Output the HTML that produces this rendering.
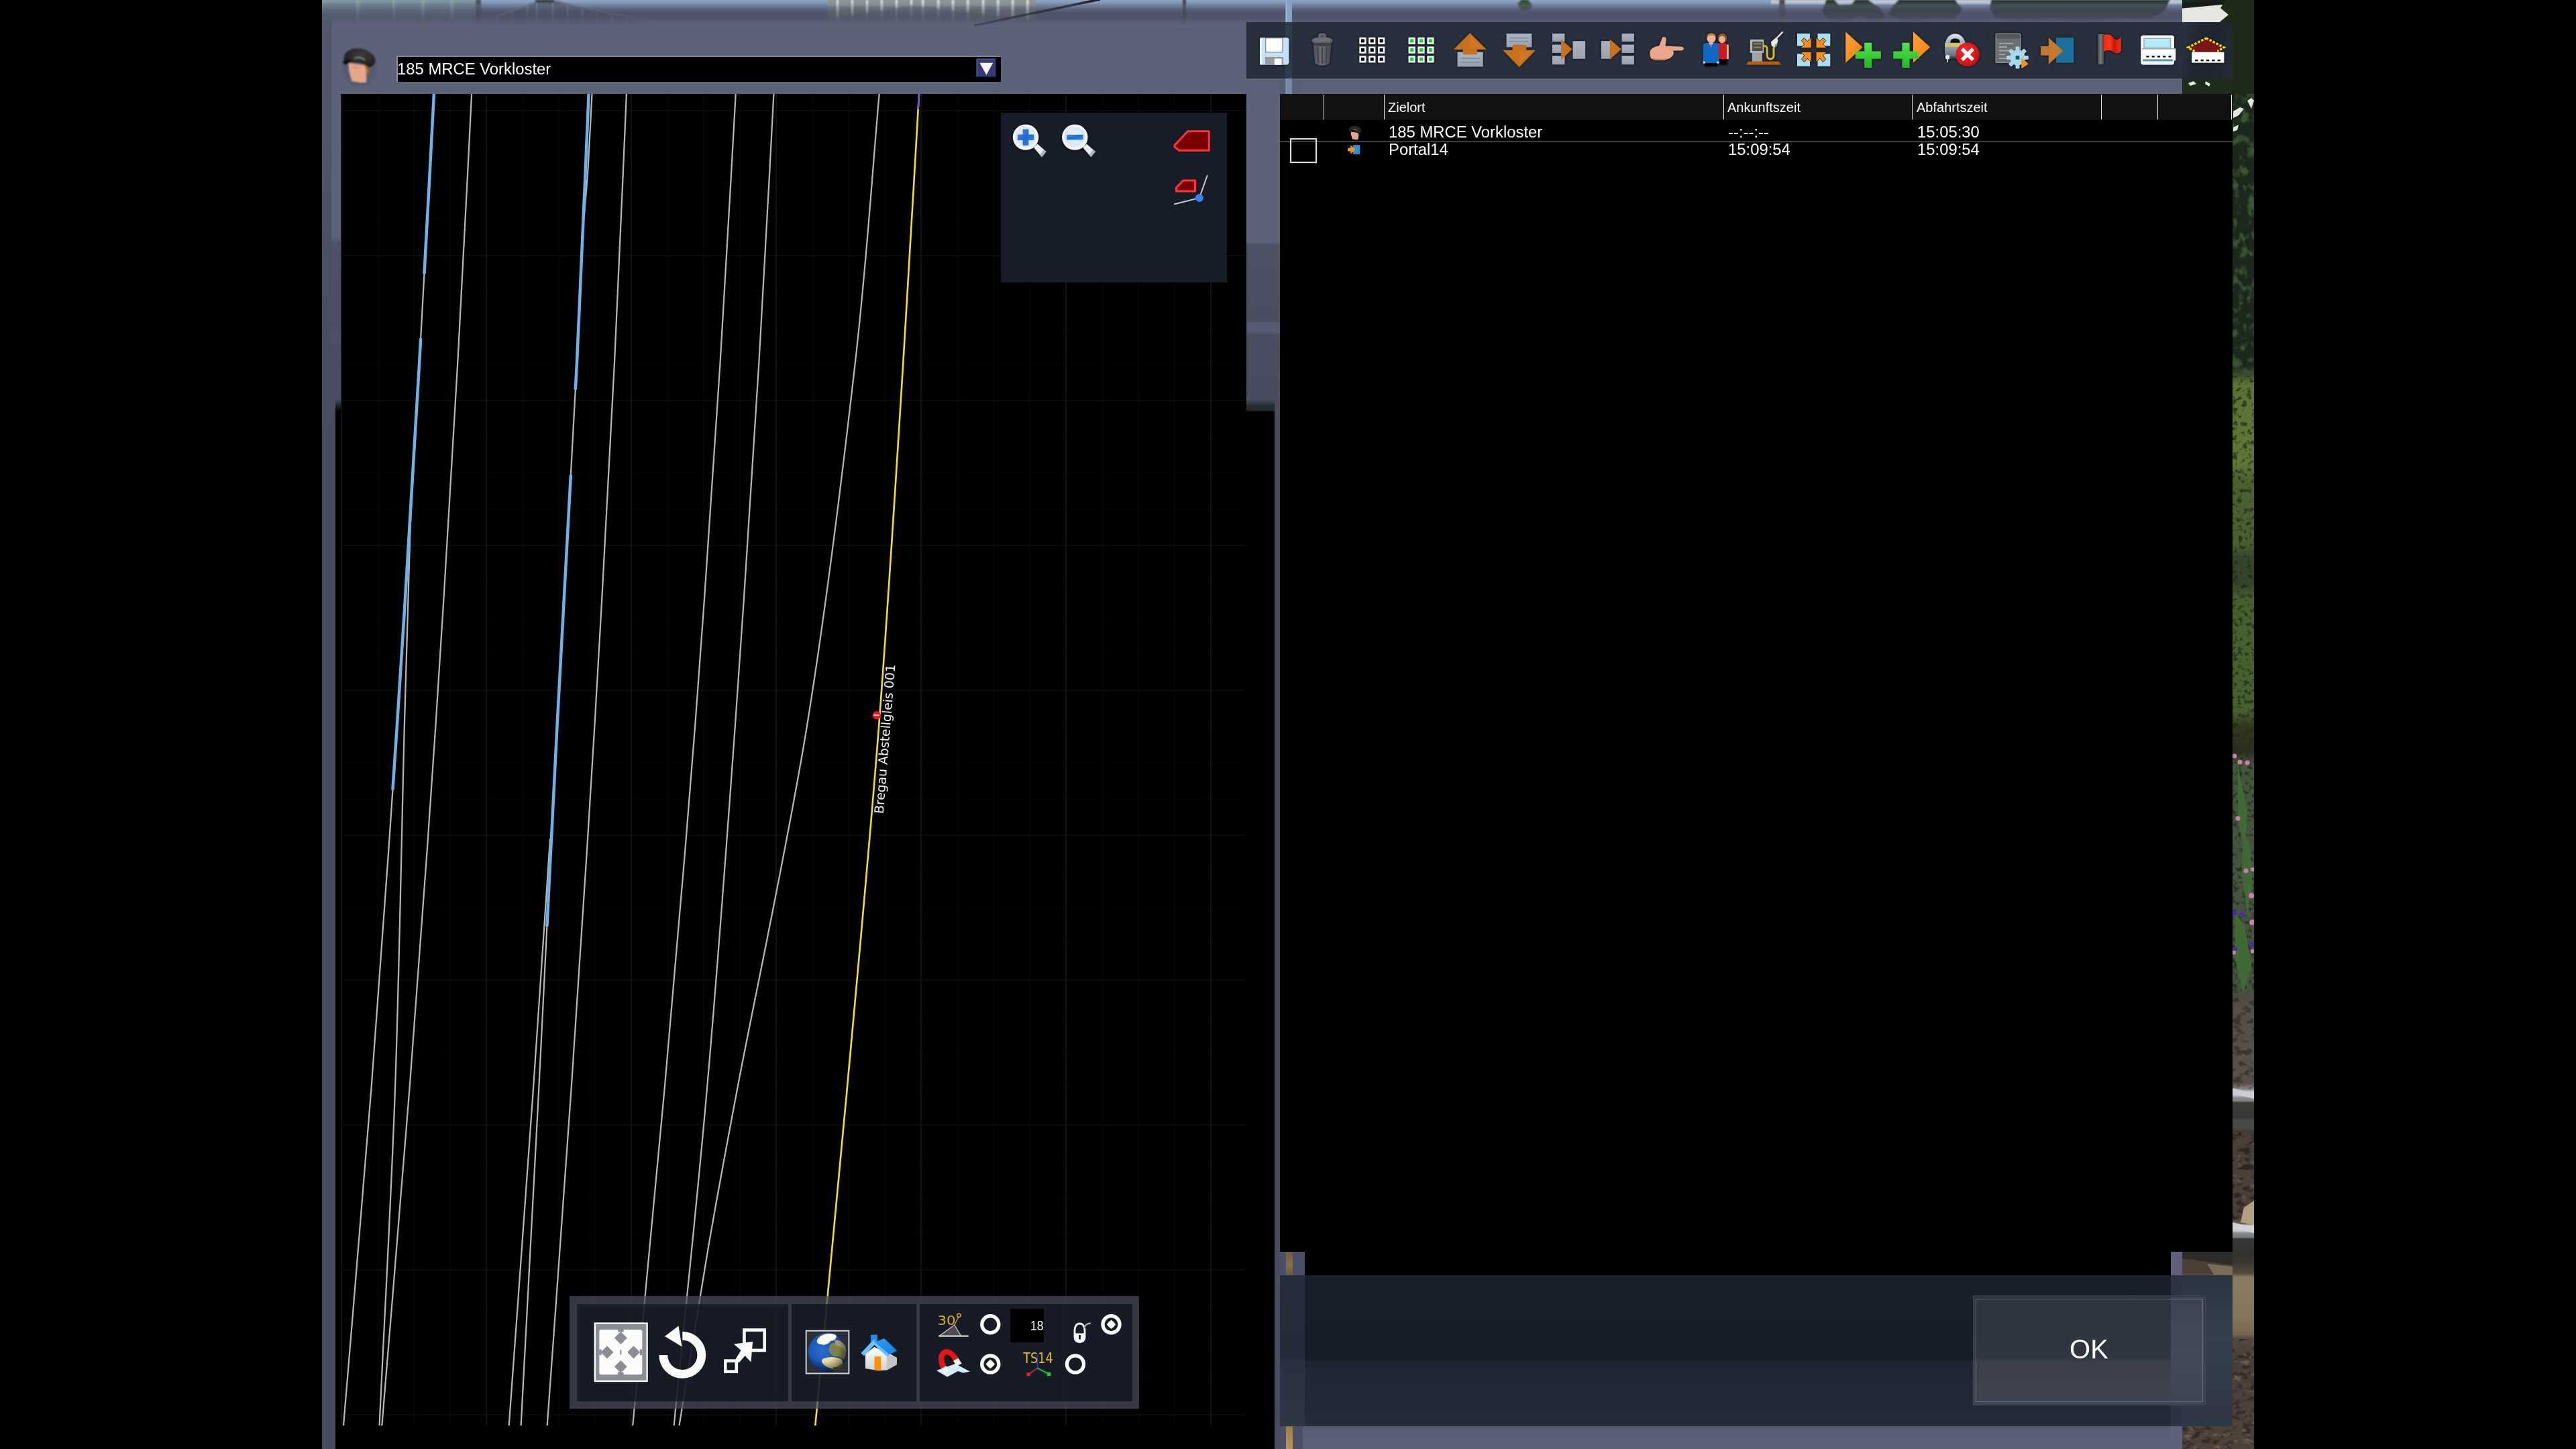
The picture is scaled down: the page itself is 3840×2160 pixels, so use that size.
<!DOCTYPE html>
<html lang="de">
<head>
<meta charset="utf-8">
<title>Fahrplan-Editor</title>
<style>
*{box-sizing:border-box;margin:0;padding:0}
html,body{width:3840px;height:2160px;background:#000;overflow:hidden}
body{position:relative;font-family:"Liberation Sans",sans-serif;color:#fff}
.abs{position:absolute}
#scene{left:480px;top:0;width:2880px;height:2160px;background:#5c6378;overflow:hidden}
/* coordinates inside #scene are absolute page coords minus 480 -> use wrapper with left:-480 */
#w{position:absolute;left:-480px;top:0;width:3840px;height:2160px}
.txt{white-space:nowrap;line-height:1;will-change:transform}
</style>
</head>
<body>
<div id="scene" class="abs"><div id="w">

<!-- ===== background scene bits ===== -->
<div id="bg-top" class="abs" style="left:480px;top:0;width:2880px;height:40px;background:linear-gradient(#8ea4c4 0,#889dbd 3px,#7a8ba9 6px,#69778f 10px,#586078 14px,#4e5369 19px,#4e546a 26px,#575d73 32px,#5c6378 38px)"></div>
<svg id="bg-top-svg" class="abs" style="left:480px;top:0" width="2880" height="140" viewBox="480 0 2880 140">
<defs>
<filter id="bgb" x="-1%" y="-20%" width="102%" height="140%"><feGaussianBlur stdDeviation="1.300"/></filter>
<linearGradient id="fadeD" x1="0" y1="0" x2="0" y2="1"><stop offset="0" stop-color="#fff" stop-opacity="1"/><stop offset="0.220" stop-color="#fff" stop-opacity="0.550"/><stop offset="0.900" stop-color="#fff" stop-opacity="0"/></linearGradient>
<mask id="mfade" maskUnits="userSpaceOnUse" x="480" y="0" width="2880" height="40"><rect x="480" y="0" width="2880" height="40" fill="url(#fadeD)"/></mask>
<filter id="leaf" color-interpolation-filters="sRGB" x="0" y="0" width="100%" height="100%"><feTurbulence type="fractalNoise" baseFrequency="0.090 0.120" numOctaves="2" seed="7" result="n"/><feColorMatrix in="n" type="matrix" values="0 0 0 0 0.100  0 0 0 0 0.160  0 0 0 0 0.090  0 0 0 -7 3.900"/><feGaussianBlur stdDeviation="0.700"/></filter>
</defs>
<g mask="url(#mfade)" filter="url(#bgb)">
<!-- glass building left -->
<rect x="480" y="0" width="237" height="40" fill="#66787c"/>
<rect x="480" y="0" width="237" height="5" fill="#7c9298"/>
<g fill="#8fa3a6" opacity="0.700"><rect x="531" y="0" width="5" height="40"/><rect x="585" y="0" width="4" height="40"/><rect x="628" y="0" width="5" height="40"/><rect x="671" y="0" width="5" height="40"/></g>
<rect x="709" y="0" width="8" height="40" fill="#3c4448"/>
<!-- gable roof -->
<path d="M812 -2 L968 32 L968 40 L720 40 L720 32Z" fill="#4a5062"/>
<path d="M812 -2 L968 32 M812 -2 L720 32" stroke="#707888" stroke-width="2" fill="none"/>
<g stroke="#7e8698" stroke-width="1.600"><path d="M742 25V40M764 17V40M786 9V40M800 4V40M824 4V40M846 9V40M868 14V40M890 19V40M912 23V40M934 27V40M952 30V40"/></g>
<rect x="798" y="0" width="28" height="4" fill="#2c3438"/>
<!-- ribbed building mid -->
<rect x="1234" y="0" width="310" height="40" fill="#70766e"/>
<rect x="1234" y="0" width="310" height="9" fill="#8c9288"/>
<g fill="#e8e8e0"><rect x="1247" y="0" width="3" height="40"/><rect x="1269" y="0" width="3" height="40"/><rect x="1291" y="0" width="3" height="40"/><rect x="1313" y="0" width="3" height="40"/><rect x="1335" y="0" width="3" height="40"/><rect x="1357" y="0" width="3" height="40"/><rect x="1374" y="0" width="3.500" height="40"/><rect x="1397" y="0" width="3.500" height="40"/><rect x="1419" y="0" width="3.500" height="40"/><rect x="1441" y="0" width="3.500" height="40"/><rect x="1464" y="0" width="3.500" height="40"/><rect x="1486" y="0" width="3.500" height="40"/><rect x="1508" y="0" width="3.500" height="40"/><rect x="1530" y="0" width="3.500" height="40"/></g>
<path d="M1234 28 L1360 8 L1544 30 L1544 40 L1234 40Z" fill="#5a6068" opacity="0.600"/>
<path d="M2262 6 l6 -6 l10 0 l6 8 l-4 6 l-12 2z" fill="#2a3a22"/>
<!-- trees right -->
<rect x="2640" y="0" width="720" height="6" fill="#c6ccd6"/>
<g fill="#1e2c1a">
<path d="M2722 0 L2735 0 L2742 8 L2760 6 L2765 0 L2785 0 L2800 10 L2812 26 L2795 32 L2770 24 L2750 34 L2728 30 L2716 18Z"/>
<path d="M2830 0 L2915 0 L2925 14 L2912 30 L2885 26 L2860 34 L2835 30 L2815 22 L2822 8Z"/>
<path d="M2968 0 L3235 0 L3228 14 L3205 30 L3160 26 L3110 34 L3060 30 L3010 32 L2975 26 L2966 12Z"/>
</g>
<rect x="2652" y="0" width="9" height="40" fill="#433c3e"/>
<rect x="1763" y="0" width="5" height="40" fill="#34343c"/>
</g>
<!-- cable -->
<path d="M1452 38 L1640 -1" stroke="#15161c" stroke-width="3.600" opacity="0.900" mask="url(#mfade)"/>
<path d="M1452 38 L1640 -1" stroke="#15161c" stroke-width="3" opacity="0.300"/>
<!-- light pole -->
<rect x="1916.500" y="0" width="9.500" height="140" fill="#85a3c4"/>
<rect x="1916.500" y="0" width="2" height="140" fill="#9ab6d4"/>
<rect x="1905" y="110" width="35" height="30" fill="#535a70" opacity="0.350"/>
</svg>
<!-- right strip -->
<div id="bg-right" class="abs" style="left:3253px;top:0;width:107px;height:2160px;background:linear-gradient(#1b281b 0,#1b281b 545px,#33452a 556px,#5c7234 572px,#5e7636 690px,#4a622f 715px,#48602e 810px,#36462a 830px,#34442a 870px,#45602e 890px,#46602e 1060px,#34381f 1082px,#2c2e1e 1120px,#42563a 1140px,#465440 1300px,#44523e 1470px,#4c4a40 1486px,#574e48 1500px,#5a504a 1615px,#8e8a86 1624px,#c9cdd1 1628px,#c2c6ca 1633px,#8c8e90 1636px,#7c7e80 1641px,#3c3a38 1644px,#3a3836 1666px,#4a4844 1669px,#4a4844 1682px,#463c36 1685px,#4a4038 1700px,#4c4038 1815px,#6a5c4c 1824px,#d0d4d8 1827px,#c6cace 1835px,#8a8c8e 1838px,#7a7c7e 1844px,#383632 1847px,#34322e 1866px,#3a3631 1880px,#54493e 1898px,#8a7c62 1904px,#85775e 1960px,#75684f 1988px,#544840 1996px,#4a4038 2030px,#4e433a 2160px)"></div>
<svg id="bg-right-svg" class="abs" style="left:3253px;top:0" width="107" height="2160" viewBox="3253 0 107 2160">
<defs>
<filter id="ntree" color-interpolation-filters="sRGB" x="0" y="0" width="100%" height="100%"><feTurbulence type="fractalNoise" baseFrequency="0.080 0.060" numOctaves="3" seed="3"/><feColorMatrix type="matrix" values="0 0 0 0 0.220  0 0 0 0 0.330  0 0 0 0 0.190  4.500 0 0 0 -2.250"/></filter>
<filter id="ngrass" color-interpolation-filters="sRGB" x="0" y="0" width="100%" height="100%"><feTurbulence type="fractalNoise" baseFrequency="0.140" numOctaves="3" seed="11"/><feColorMatrix type="matrix" values="0 0 0 0 0.120  0 0 0 0 0.170  0 0 0 0 0.080  4.500 0 0 0 -2.350"/></filter>
<filter id="nrock" color-interpolation-filters="sRGB" x="0" y="0" width="100%" height="100%"><feTurbulence type="fractalNoise" baseFrequency="0.070 0.110" numOctaves="3" seed="5"/><feColorMatrix type="matrix" values="0 0 0 0 0.160  0 0 0 0 0.130  0 0 0 0 0.120  4.500 0 0 0 -2.200"/></filter>
<filter id="nrock2" color-interpolation-filters="sRGB" x="0" y="0" width="100%" height="100%"><feTurbulence type="fractalNoise" baseFrequency="0.070 0.110" numOctaves="3" seed="9"/><feColorMatrix type="matrix" values="0 0 0 0 0.560  0 0 0 0 0.450  0 0 0 0 0.420  4.500 0 0 0 -2.700"/></filter>
</defs>
<rect x="3328" y="117" width="32" height="440" filter="url(#ntree)"/>
<rect x="3328" y="560" width="32" height="920" filter="url(#ngrass)" opacity="0.800"/>
<rect x="3328" y="1486" width="32" height="138" filter="url(#nrock)" opacity="0.600"/>
<rect x="3328" y="1686" width="32" height="136" filter="url(#nrock)" opacity="0.900"/>
<rect x="3328" y="1686" width="32" height="136" filter="url(#nrock2)" opacity="0.500"/>
<rect x="3253" y="1996" width="107" height="164" filter="url(#nrock)" opacity="0.700"/>
<rect x="3253" y="1996" width="107" height="164" filter="url(#nrock2)" opacity="0.750"/>
<!-- rails tilt -->
<path d="M3328 1622 L3360 1630 L3360 1638 L3328 1630Z" fill="#c9cdd1"/>
<path d="M3328 1822 L3360 1830 L3360 1838 L3328 1830Z" fill="#d0d4d8"/>
<path d="M3345 1800 L3360 1790 L3360 1826 L3340 1822Z" fill="#b0a080"/>
<!-- white wall top-right and tree -->
<rect x="3253" y="6" width="70" height="134" fill="#e6e6e1"/>
<path d="M3225 7 L3360 -5 L3360 2.500 L3253 12.500 L3225 15Z" fill="#1a1c1c"/>
<path d="M3360 0 L3318 0 L3310 12 L3322 22 L3305 36 L3318 52 L3304 70 L3320 86 L3300 104 L3320 118 L3330 140 L3360 140Z" fill="#1d2a18"/>
<path d="M3253 117 L3328 117 L3328 140 L3253 140Z" fill="#1f2b1b"/>
<path d="M3262 124 l8 -3 l4 4 l-9 3z M3288 121 l7 4 l-2 4 l-6 -4z" fill="#e8e8e4"/>
<path d="M3329 166 l10 -6 l6 2 l-8 10 l-8 4z M3350 150 l6 -4 l4 4 l-4 12z M3329 190 l8 -4 l-2 8 l-6 2z" fill="#e4e4e0"/>
<!-- flowers -->
<g fill="#3f6a36"><path d="M3336 1140 l6 30 l8 40 l-4 60 l-10 -50z M3344 1240 l10 20 l4 60 l-8 40 l-8 -60z M3332 1360 l14 20 l10 60 l-12 40 l-12 -50z"/></g>
<g fill="#cf7ab4"><circle cx="3331" cy="1127" r="3.500"/><circle cx="3339" cy="1136" r="3.500"/><circle cx="3350" cy="1137" r="3.500"/><circle cx="3336" cy="1220" r="3.500"/><circle cx="3348" cy="1298" r="3.500"/><circle cx="3358" cy="1296" r="3"/><circle cx="3356" cy="1335" r="4"/><circle cx="3357" cy="1375" r="4"/><circle cx="3330" cy="1420" r="3"/><circle cx="3358" cy="1418" r="3"/></g>
<g fill="#4c2ab0"><circle cx="3330" cy="1361" r="4"/><circle cx="3342" cy="1363" r="3.500"/><circle cx="3357" cy="1408" r="4"/><circle cx="3332" cy="1414" r="3"/></g>
<!-- sleeper lower right (below list) -->
<path d="M3253 1866 L3328 1866 L3328 1900 L3253 1900Z" fill="#4a4038"/>
<path d="M3253 1866 L3328 1866 L3328 1886 L3253 1876Z" fill="#2e2c28"/>
<path d="M3290 1884 L3328 1888 L3328 1900 L3300 1900Z" fill="#7a6c58"/>
</svg>

<!-- ===== left panel frame ===== -->
<div id="frameL-edge" class="abs" style="left:480px;top:30px;width:14px;height:2130px;background:linear-gradient(#50566b 0,#51576c 8px,#50556a 200px,#4a4f63 330px,#494e62 560px,#484c61 620px,#474b60 2130px)"></div>
<div id="frameL-in" class="abs" style="left:494px;top:37px;width:14px;height:2123px;background:linear-gradient(#5c6378 0,#5c6378 316px,#4c5166 326px,#4a4f64 450px,#4d5268 468px,#494e63 480px,#484c61 583px,#474b60 2123px)"></div>
<div id="frameL-fade" class="abs" style="left:500px;top:596px;width:8px;height:18px;background:linear-gradient(#43485c 0,#2a3238 6px,#10161a 12px,#000 18px)"></div>
<div id="gap" class="abs" style="left:1858px;top:117px;width:50px;height:2043px;background:linear-gradient(#5c6378 0,#5c6378 243px,#4c5166 248px,#494e62 360px,#555b73 366px,#565c74 376px,#484d61 382px,#474c5f 478px,#3a4146 483px,#262e31 487px,#232b2e 494px,#0a0e10 497px,#000 499px)"></div>
<div id="gapR" class="abs" style="left:1900px;top:598px;width:8px;height:1562px;background:#484c61"></div>

<!-- black backing -->
<div id="blk" class="abs" style="left:500px;top:613px;width:1400px;height:1547px;background:#000"></div>

<!-- ===== map ===== -->
<div id="map" class="abs" style="left:508px;top:140px;width:1350px;height:1985px;background-color:#000;background-image:
linear-gradient(90deg,#121212 0,#121212 2px,transparent 2px),
linear-gradient(#0b0b0b 0,#0b0b0b 2px,transparent 2px),
linear-gradient(90deg,#040404 0,#040404 2px,transparent 2px),
linear-gradient(#030303 0,#030303 2px,transparent 2px);
background-size:216px 216px,216px 216px,54px 54px,54px 54px;
background-position:0 0,0 24px,0 0,0 24px"></div>
<svg id="tracks" class="abs" style="left:508px;top:140px" width="1350" height="1985" viewBox="508 140 1350 1985">
<defs>
<filter id="gray" x="-10%" y="-10%" width="120%" height="120%"><feOffset dx="0" dy="0"/></filter>
<clipPath id="cb1"><rect x="508" y="140" width="400" height="268"/><rect x="508" y="504.600" width="400" height="673"/></clipPath>
<clipPath id="cb2"><rect x="700" y="140" width="400" height="441"/><rect x="700" y="708" width="400" height="673"/></clipPath>
</defs>
<g fill="none" stroke="#b6b6b6" stroke-width="2.250">
<path id="T1" d="M646.9 140.0 C639.7 273.3 634.4 383.3 625.2 540.0 C616.1 696.7 603.9 900.0 592.0 1080.0 C580.1 1260.0 567.0 1445.8 553.7 1620.0 C540.4 1794.2 525.9 1956.7 512.0 2125.0"/>
<path id="T1b" d="M616.4 700.0 C614.7 733.3 613.5 736.7 611.2 800.0 C609.0 863.3 606.6 943.3 602.9 1080.0 C599.2 1216.7 595.3 1445.8 589.1 1620.0 C582.9 1794.2 573.4 1956.7 565.6 2125.0"/>
<path id="T2" d="M703.1 140.0 C696.2 273.3 691.2 383.3 682.3 540.0 C673.4 696.7 661.4 900.0 649.5 1080.0 C637.6 1260.0 624.1 1445.8 610.7 1620.0 C597.3 1794.2 583.1 1956.7 569.3 2125.0"/>
<path id="T3" d="M877.6 140.0 C871.7 273.3 867.8 383.3 860.0 540.0 C852.2 696.7 840.0 900.0 830.6 1080.0 C821.2 1260.0 812.4 1445.8 803.4 1620.0 C794.4 1794.2 785.5 1956.7 776.6 2125.0"/>
<path id="T3a" d="M882.5 140.0 C880.5 176.7 878.6 219.2 876.6 250.0 C874.6 280.8 872.5 300.0 870.4 325.0"/>
<path id="T3b" d="M820.0 1250.0 C811.7 1373.3 805.4 1474.2 795.2 1620.0 C785.0 1765.8 770.9 1956.7 758.7 2125.0"/>
<path id="T4" d="M933.9 140.0 C927.9 273.3 923.9 383.3 916.0 540.0 C908.1 696.7 897.2 900.0 886.5 1080.0 C875.8 1260.0 863.6 1445.8 851.8 1620.0 C840.0 1794.2 827.7 1956.7 815.7 2125.0"/>
<path id="T5" d="M1096.7 140.0 C1089.0 273.3 1083.7 383.3 1073.6 540.0 C1063.5 696.7 1050.1 900.0 1036.3 1080.0 C1022.5 1260.0 1006.4 1445.8 990.9 1620.0 C975.4 1794.2 959.1 1956.7 943.2 2125.0"/>
<path id="T6" d="M1153.4 140.0 C1146.1 273.3 1141.0 383.3 1131.4 540.0 C1121.8 696.7 1108.9 900.0 1096.0 1080.0 C1083.1 1260.0 1069.4 1445.8 1054.2 1620.0 C1039.0 1794.2 1021.2 1956.7 1004.7 2125.0"/>
<path id="T7" d="M1310.7 140.0 C1298.8 273.3 1292.8 383.3 1274.9 540.0 C1257.0 696.7 1232.5 900.0 1203.3 1080.0 C1174.1 1260.0 1124.3 1490.0 1099.7 1620.0 C1075.1 1750.0 1070.3 1775.8 1055.8 1860.0 C1041.3 1944.2 1026.9 2036.7 1012.5 2125.0"/>
</g>
<g fill="none" stroke="#6db2e8" stroke-width="4.500">
<use href="#T1" clip-path="url(#cb1)"/>
<use href="#T3" clip-path="url(#cb2)"/>
</g>
<path id="T8" fill="none" stroke="#f4e11e" stroke-width="2.6" d="M1370.0 140.0 C1362.1 273.3 1356.4 383.3 1346.4 540.0 C1336.5 696.7 1324.2 900.0 1310.3 1080.0 C1296.4 1260.0 1278.8 1445.8 1263.0 1620.0 C1247.2 1794.2 1231.2 1956.7 1215.3 2125.0"/>
<path fill="none" stroke="#5c5ccc" stroke-width="2.6" d="M1370 140 L1368.7 163"/>
<circle cx="1306.700" cy="1066.300" r="6.200" fill="#e8141c"/>
<rect x="1302.500" y="1065" width="8.400" height="2.200" fill="#f6c8c8"/>
<g filter="url(#gray)"><text x="0" y="0" transform="translate(1316.700 1213.400) rotate(-85.440)" font-family="'DejaVu Sans','Liberation Sans',sans-serif" font-size="18.850" fill="#f2f2f2">Bregau Abstellgleis 001</text></g>
</svg>

<!-- ===== map nav toolbar ===== -->
<div id="nav" class="abs" style="left:849px;top:1932px;width:848.500px;height:168px;background:rgba(72,77,95,0.740)"></div>
<div id="nav1" class="abs" style="left:860px;top:1943.500px;width:315px;height:145px;background:rgba(10,14,24,0.700);box-shadow:inset 3px 3px 4px rgba(50,55,70,0.350)"></div>
<div id="nav2" class="abs" style="left:1180px;top:1943.500px;width:186px;height:145px;background:rgba(10,14,24,0.700)"></div>
<div id="nav3" class="abs" style="left:1371px;top:1943.500px;width:316.500px;height:145px;background:rgba(10,14,24,0.700)"></div>
<svg id="navicons" class="abs" style="left:849px;top:1932px" width="849" height="168" viewBox="849 1932 849 168">
<defs>
<filter id="nvb" x="-5%" y="-10%" width="110%" height="120%"><feGaussianBlur stdDeviation="0.600"/></filter>
<filter id="nvg" x="-20%" y="-20%" width="140%" height="140%"><feOffset dx="0" dy="0"/></filter>
<radialGradient id="ocean" cx="0.35" cy="0.45" r="0.75"><stop offset="0" stop-color="#2a6fd0"/><stop offset="0.600" stop-color="#1650a8"/><stop offset="1" stop-color="#0a2a66"/></radialGradient>
<radialGradient id="gshade" cx="0.4" cy="0.35" r="0.7"><stop offset="0.550" stop-color="#000" stop-opacity="0"/><stop offset="1" stop-color="#000" stop-opacity="0.600"/></radialGradient>
<linearGradient id="wall" x1="0" y1="0" x2="0" y2="1"><stop offset="0" stop-color="#ffffff"/><stop offset="1" stop-color="#d2d2d2"/></linearGradient>
<linearGradient id="roof" x1="0" y1="0" x2="1" y2="1"><stop offset="0" stop-color="#3aa4f6"/><stop offset="1" stop-color="#0f7fe4"/></linearGradient>
<clipPath id="gclip"><circle cx="1233.600" cy="2015.800" r="29"/></clipPath>
</defs>
<g filter="url(#nvb)">
<!-- move button -->
<rect x="886.800" y="1972.600" width="77.800" height="86.300" fill="#8a8d94" stroke="#fafafa" stroke-width="2.400"/>
<rect x="893.300" y="1982" width="64" height="67" rx="3" fill="#fbfbfa"/>
<g fill="#8a8d94">
<path d="M925.300 1985 L934.800 1994.500 L925.300 2004 L915.800 1994.500Z"/>
<path d="M925.300 2027.800 L934.800 2037.300 L925.300 2046.800 L915.800 2037.300Z"/>
<path d="M905 2006.300 L914.500 2015.800 L905 2025.300 L895.500 2015.800Z"/>
<path d="M944.500 2006.300 L954 2015.800 L944.500 2025.300 L935 2015.800Z"/>
<rect x="893.300" y="2011.500" width="3.500" height="8.600"/><rect x="953.800" y="2011.500" width="3.500" height="8.600"/>
<rect x="921" y="1982" width="8.600" height="3.500"/><rect x="921" y="2045.500" width="8.600" height="3.500"/>
<rect x="924.300" y="2012.300" width="2" height="7"/>
</g>
<!-- rotate -->
<path d="M1017.300 1991.400 A28.500 28.500 0 1 1 988.800 2019.900" fill="none" stroke="#fbfbfa" stroke-width="12.800"/>
<path d="M991 1992 L1011.500 1976.500 L1016.500 2007.500Z" fill="#fbfbfa"/>
<!-- scale -->
<rect x="1109.400" y="1982.600" width="30.300" height="30.300" fill="none" stroke="#fbfbfa" stroke-width="4.700"/>
<rect x="1081.300" y="2028.600" width="16.500" height="16" fill="none" stroke="#fbfbfa" stroke-width="4.600"/>
<path d="M1096 2027 L1104.500 2013 L1094 2003.500 L1122 2000 L1119.500 2030.500 L1110.500 2021 L1101.500 2031.500Z" fill="#fbfbfa"/>
<rect x="1111.800" y="1985" width="25.600" height="25.600" fill="#171c28" opacity="0"/>
<!-- globe -->
<rect x="1201.700" y="1983.800" width="63.700" height="63.600" fill="#2b2d34" stroke="#d0d2d6" stroke-width="2"/>
<circle cx="1233.600" cy="2015.800" r="29" fill="url(#ocean)"/>
<g clip-path="url(#gclip)">
<path d="M1219 1996 C1224 1988 1238 1986 1246 1990 C1249 1994 1244 1999 1238 1999 C1236 2003 1229 2006 1224 2004 C1219 2004 1216 2000 1219 1996Z" fill="#fafafa"/>
<path d="M1238 2004 C1244 2000 1254 2000 1259 2006 C1262 2012 1262 2022 1258 2028 C1254 2024 1250 2022 1244 2022 C1238 2020 1234 2014 1236 2008Z" fill="#7e8448"/>
<path d="M1244 1998 C1250 1996 1256 2000 1260 2006 L1262 2016 C1258 2010 1252 2006 1246 2006Z" fill="#a89868"/>
<path d="M1226 2026 C1232 2022 1246 2022 1254 2026 C1258 2030 1256 2036 1250 2040 C1244 2042 1236 2040 1230 2036 C1225 2032 1224 2029 1226 2026Z" fill="#ecdca2"/>
<path d="M1242 2038 C1248 2038 1252 2036 1254 2032 C1254 2040 1250 2044 1246 2046 C1242 2044 1241 2041 1242 2038Z" fill="#5e7236"/>
</g>
<circle cx="1233.600" cy="2015.800" r="29" fill="url(#gshade)"/>
<!-- house -->
<path d="M1290 2018 L1303 2008 L1323 2016 L1337 2024 L1337 2034 L1322 2042.500 L1308 2043 L1290 2040Z" fill="url(#wall)"/>
<path d="M1322 2018 L1337 2024 L1337 2034 L1322 2042.500Z" fill="#c4c4c4"/>
<rect x="1303.500" y="2022.200" width="9.500" height="19.800" fill="#f89200"/>
<path d="M1298 1990 L1308 1989.600 L1308 1997 L1298 2004Z" fill="#1c8cee"/>
<path d="M1303.300 1996 L1283.600 2017 L1288 2021 L1303.300 2005 L1322 2021.500 L1337.200 2013.500 L1318 1995 L1309 1999Z" fill="url(#roof)"/>
<path d="M1303.300 1996 L1283.600 2017 L1288 2021 L1303.300 2005 L1322 2021.500 L1326 2019.500 L1303.300 2000Z" fill="#6cc0fa"/>
<!-- 30deg -->
<path d="M1400 1991.500 L1422.800 1975 L1432.500 1991.500Z" fill="#4e4e50" stroke="#cfcfcf" stroke-width="1.200"/>
<path d="M1399.500 1991.700 H1443.800" stroke="#d6d6d6" stroke-width="2.200"/>
<path d="M1422.800 1975 L1429 1963" stroke="#c9a516" stroke-width="1.400"/>
<text x="1397.500" y="1975.300" font-family="'DejaVu Sans','Liberation Sans',sans-serif" font-size="19" fill="#d8b312" textLength="27" lengthAdjust="spacingAndGlyphs">30</text>
<circle cx="1429.300" cy="1960.800" r="2.600" fill="none" stroke="#d8b312" stroke-width="1.500"/>
<!-- rings -->
<g fill="none" stroke="#fcfcfc" stroke-width="5.200">
<circle cx="1476.300" cy="1974.300" r="12.600"/><circle cx="1656.500" cy="1974.300" r="12.600"/>
<circle cx="1476.300" cy="2033.400" r="12.600"/><circle cx="1603" cy="2033.400" r="12.600"/>
</g>
<path d="M1656.500 1967.500 L1663.300 1974.300 L1656.500 1981.100 L1649.700 1974.300Z" fill="#fcfcfc"/>
<path d="M1476.300 2026.600 L1483.100 2033.400 L1476.300 2040.200 L1469.500 2033.400Z" fill="#fcfcfc"/>
<circle cx="1656.500" cy="1974.300" r="5.200" fill="#fcfcfc"/><circle cx="1476.300" cy="2033.400" r="5.200" fill="#fcfcfc"/>
<!-- black box -->
<rect x="1505.900" y="1950.900" width="50.200" height="50" fill="#000"/>
<!-- mouse lock -->
<path d="M1602 1984 C1602 1976.500 1605.500 1973 1609.500 1973 C1613.500 1973 1617 1976.500 1617 1984 L1617 1994 C1617 1998.500 1613.500 2000.500 1609.500 2000.500 C1605.500 2000.500 1602 1998.500 1602 1994Z" fill="none" stroke="#fbfbfb" stroke-width="2.800"/>
<path d="M1602 1987.500 L1617 1987.500 L1617 1994 C1617 1998.500 1613.500 2000.500 1609.500 2000.500 C1605.500 2000.500 1602 1998.500 1602 1994Z" fill="#fbfbfb"/>
<rect x="1608.100" y="1990" width="2.800" height="6.500" fill="#171c28"/>
<path d="M1616 1980 C1617 1975.500 1621 1973 1626 1972.500" fill="none" stroke="#b9bcc0" stroke-width="1.800"/>
<!-- magnet -->
<path d="M1396 2043 L1424 2033 L1446 2044.500 L1436 2046.500 L1428 2044 L1412 2052.500Z" fill="#d4ecfa"/>
<path d="M1403 2040.500 C1397 2030 1398 2017 1405.500 2012.500 C1413 2008.500 1422 2013 1428.500 2024.500 L1421 2028.500 C1417 2021 1412.500 2018.500 1409.500 2020 C1406.500 2022 1406.500 2028 1410.500 2036Z" fill="#e21212"/>
<path d="M1428.500 2024.500 L1433.500 2032.500 L1426 2036.500 L1421 2028.500Z" fill="#f3f3f3"/>
<path d="M1410.500 2036 L1415 2044.500 L1408 2048 L1403 2040.500Z" fill="#f3f3f3"/>
<path d="M1409.500 2020 C1412.500 2018.500 1417 2021 1421 2028.500 L1418 2030 C1415 2024 1412 2022 1410.500 2022.600Z" fill="#1a0606"/>
<!-- TS14 -->
<path d="M1546.500 2019.700 L1546.500 2039.400" stroke="#2a30d8" stroke-width="2.200"/>
<path d="M1546.500 2039.400 L1533.500 2048.600" stroke="#c81e24" stroke-width="2.200"/>
<path d="M1546.500 2039.400 L1563.500 2048.200" stroke="#18b428" stroke-width="2.200"/>
<rect x="1530.500" y="2046" width="5.400" height="5.400" fill="#e0222a"/><rect x="1560.800" y="2045.500" width="5.600" height="5.600" fill="#1cc82e"/>
<text x="1525.300" y="2031.800" font-family="'DejaVu Sans','Liberation Sans',sans-serif" font-size="21" fill="#e6c01c" textLength="44.400" lengthAdjust="spacingAndGlyphs">TS14</text>
</g>
<g filter="url(#nvg)"><text x="1536" y="1982.900" font-family="'Liberation Sans',sans-serif" font-size="20.200" fill="#fff" textLength="19.600" lengthAdjust="spacingAndGlyphs">18</text></g>
</svg>

<!-- ===== dropdown + driver icon ===== -->
<svg id="driver" class="abs" style="left:504px;top:64px" width="64" height="68" viewBox="504 64 64 68">
<defs><filter id="bl1" x="-20%" y="-20%" width="140%" height="140%"><feGaussianBlur stdDeviation="0.9"/></filter>
<radialGradient id="capg" cx="0.55" cy="0.35" r="0.7"><stop offset="0" stop-color="#3c3c3a"/><stop offset="1" stop-color="#1c1c1c"/></radialGradient></defs>
<g filter="url(#bl1)">
<ellipse cx="536" cy="100" rx="26" ry="29" fill="#3c4258" opacity="0.220"/>
<path d="M519.300 94 L545.500 97.500 L546.200 122.500 L538 123.200 L524.500 121 L520.500 107 Z" fill="#e6a68c"/>
<path d="M541 95.500 C546 97 550 101 549.500 108 C548 113 546.500 110 545.800 104 C545 100 543 98 541 95.500Z" fill="#c2660e"/>
<path d="M525 100 L534 101.500" stroke="#c88a78" stroke-width="1.300" fill="none"/>
<path d="M513 86 C513 76 525 71.500 536 72.500 C549 74 560 82 559.500 91 C559 97 554 100 549 100.500 C546 97 541 94.500 533 93.500 C526 92.500 521 93 517.500 94.500 C513.500 95 511.500 91.500 513 86Z" fill="url(#capg)"/>
<path d="M511.500 92 C514 88.500 519 88 524 89.500 C522 93 519 95.500 516 96 C513 96.500 510.500 95 511.500 92Z" fill="#111"/>
<path d="M529 87 C533 84.500 539 85.500 543 89" stroke="#7b7f84" stroke-width="2" fill="none" stroke-linecap="round"/>
</g>
</svg>
<div id="dd" class="abs" style="left:591px;top:83px;width:901px;height:39px;background:#000;border-left:2px solid #8a8f9c;border-top:2px solid #7c8190"></div>
<div id="ddtext" class="abs txt" style="left:592px;top:90.600px;font-size:23.850px;color:#fff">185 MRCE Vorkloster</div>
<svg id="ddbtn" class="abs" style="left:1455px;top:87px" width="31" height="29" viewBox="0 0 31 29"><defs><filter id="ddb"><feGaussianBlur stdDeviation="0.600"/></filter></defs>
<rect x="0.500" y="0.500" width="29.500" height="27.500" fill="#333a74"/>
<rect x="0.500" y="0.500" width="29.500" height="2" fill="#4a5190"/><rect x="0.500" y="0.500" width="2" height="27.500" fill="#4a5190"/>
<rect x="0.500" y="26" width="29.500" height="2" fill="#23285a"/><rect x="28" y="0.500" width="2" height="27.500" fill="#23285a"/>
<path d="M5.500 6.800 L25.200 6.800 L15.400 24.700 Z" fill="#f6f6fa" filter="url(#ddb)"/>
</svg>

<!-- ===== zoom panel ===== -->
<div id="zoompanel" class="abs" style="left:1492px;top:168px;width:337px;height:252.500px;background:rgba(24,30,42,0.960)"></div>
<svg id="zoomicons" class="abs" style="left:1492px;top:168px" width="337" height="253" viewBox="1492 168 337 253">
<defs>
<filter id="bl2" x="-20%" y="-20%" width="140%" height="140%"><feGaussianBlur stdDeviation="0.700"/></filter>
<radialGradient id="lens" cx="0.5" cy="0.4" r="0.6"><stop offset="0" stop-color="#eef4fb"/><stop offset="0.750" stop-color="#d7e6f6"/><stop offset="1" stop-color="#f4f7fa"/></radialGradient>
<linearGradient id="blu" x1="0" y1="0" x2="1" y2="1"><stop offset="0" stop-color="#4a90ea"/><stop offset="0.500" stop-color="#1f68d2"/><stop offset="1" stop-color="#3c86e6"/></linearGradient>
</defs>
<g filter="url(#bl2)">
 <g id="mag">
  <circle cx="1529" cy="205.500" r="21.500" fill="#0c1018" opacity="0.550"/>
  <path d="M1541 220 L1546.500 214.500 L1559.500 226 L1553 234 Z" fill="#e9eef2"/>
  <path d="M1553 234 L1559.500 226 L1556 223 L1550 231Z" fill="#aeb6be"/>
  <circle cx="1529" cy="204.600" r="19.200" fill="#f5f7fa"/>
  <circle cx="1529" cy="204.600" r="16.200" fill="url(#lens)"/>
 </g>
 <path d="M1516.800 200.400 h7.800 v-7.800 h8.800 v7.800 h7.800 v8.600 h-7.800 v7.800 h-8.800 v-7.800 h-7.800 Z" fill="url(#blu)"/>
 <use href="#mag" x="73.300" y="0"/>
 <rect x="1590.200" y="200.800" width="24.400" height="7.600" fill="url(#blu)"/>
 <path d="M1770.500 195.800 L1802.200 195.800 L1802.200 224.200 L1757.500 224.200 L1751 219 L1751 216.500 Z" fill="#780000" stroke="#ff343a" stroke-width="3" stroke-linejoin="round"/>
 <path d="M1764 269 L1781.500 269 L1781.500 285 L1753.500 285 L1753.500 279.500 Z" fill="#780000" stroke="#ff343a" stroke-width="3" stroke-linejoin="round"/>
 <path d="M1751 304.300 L1787.900 295 L1799.500 262" fill="none" stroke="#c9cdd2" stroke-width="2" stroke-linecap="round"/>
 <circle cx="1787.900" cy="295" r="6" fill="#3a82e4"/>
</g>
</svg>

<!-- ===== top toolbar ===== -->
<div id="tb" class="abs" style="left:1858px;top:33px;width:1470px;height:84px;background:#28303e"></div>
<div id="tb-r" class="abs" style="left:3253px;top:33px;width:75px;height:84px;background:linear-gradient(100deg,#2b3340 0,#202834 30%,#1d2530 60%,#242c38 100%)"></div>
<div id="tb-pole" class="abs" style="left:1916px;top:33px;width:10px;height:84px;background:#2e3d4d"></div>
<svg id="tbicons" class="abs" style="left:1858px;top:33px" width="1470" height="84" viewBox="1858 33 1470 84">
<defs>
<filter id="tbb" x="-2%" y="-30%" width="104%" height="160%">
<feGaussianBlur in="SourceAlpha" stdDeviation="2" result="sh"/>
<feFlood flood-color="#080c14" flood-opacity="0.750"/><feComposite in2="sh" operator="in" result="shc"/>
<feGaussianBlur in="SourceGraphic" stdDeviation="0.550" result="g"/>
<feMerge><feMergeNode in="shc"/><feMergeNode in="g"/></feMerge></filter>
<filter id="tbs" x="-2%" y="-30%" width="104%" height="160%"><feGaussianBlur stdDeviation="2.200"/></filter>
<linearGradient id="trg" x1="0" y1="0" x2="1" y2="0"><stop offset="0" stop-color="#4a4d53"/><stop offset="0.450" stop-color="#6a6d74"/><stop offset="1" stop-color="#44474d"/></linearGradient>
<linearGradient id="gbx" x1="0" y1="0" x2="0" y2="1"><stop offset="0" stop-color="#aab3bf"/><stop offset="1" stop-color="#98a2b0"/></linearGradient>
<linearGradient id="org" x1="0" y1="0" x2="1" y2="1"><stop offset="0" stop-color="#ffa23a"/><stop offset="1" stop-color="#f47c0e"/></linearGradient>
<linearGradient id="grn" x1="0" y1="0" x2="0" y2="1"><stop offset="0" stop-color="#52e24c"/><stop offset="1" stop-color="#22b822"/></linearGradient>
<radialGradient id="redc" cx="0.4" cy="0.35" r="0.75"><stop offset="0" stop-color="#f42a2e"/><stop offset="1" stop-color="#c80a12"/></radialGradient>
<linearGradient id="dome" x1="0" y1="0" x2="0" y2="1"><stop offset="0" stop-color="#dfeaf3"/><stop offset="0.300" stop-color="#9fbdd6"/><stop offset="0.600" stop-color="#8c9dac"/><stop offset="1" stop-color="#5d6a76"/></linearGradient>
<linearGradient id="flg" x1="0" y1="0" x2="1" y2="0"><stop offset="0" stop-color="#f02a10"/><stop offset="0.350" stop-color="#ff3a1c"/><stop offset="0.600" stop-color="#c81a08"/><stop offset="1" stop-color="#f4301a"/></linearGradient>
<linearGradient id="pol" x1="0" y1="0" x2="1" y2="0"><stop offset="0" stop-color="#4a4a4a"/><stop offset="0.500" stop-color="#7a7a7a"/><stop offset="1" stop-color="#454545"/></linearGradient>
</defs>
<g filter="url(#tbb)">
<!-- 1 save -->
<rect x="1878" y="56" width="43.200" height="40.500" rx="3.500" fill="#c3e1fb"/>
<rect x="1878" y="56" width="3.500" height="40.500" rx="1.500" fill="#e6f1fb"/>
<rect x="1886.700" y="56.600" width="25.200" height="21.200" fill="#fdfdfb" stroke="#8c8c8a" stroke-width="1.300"/>
<rect x="1885.800" y="85.800" width="27" height="11" fill="#9b9b99"/>
<rect x="1885.800" y="85.300" width="27" height="1.300" fill="#7b7b79"/>
<rect x="1899.800" y="87.300" width="10.800" height="9.300" fill="#fefefe"/>
<!-- 2 trash -->
<path d="M1957.500 64.500 L1984.500 64.500 L1981.800 94.500 Q1971 100.500 1960.200 94.500 Z" fill="url(#trg)"/>
<ellipse cx="1971" cy="60.500" rx="15.800" ry="5.600" fill="#5c5f66"/>
<ellipse cx="1971" cy="59.200" rx="13" ry="3.600" fill="#6c6f76"/>
<rect x="1965.500" y="49.800" width="11" height="7" rx="2.500" fill="#666970"/>
<rect x="1968.500" y="52.300" width="5" height="3" fill="#4c4f56"/>
<ellipse cx="1971" cy="66.300" rx="13.500" ry="2.600" fill="#3e4147"/>
<path d="M1964.300 70 L1965.300 94 M1971 70.500 L1971 95.500 M1977.700 70 L1976.700 94" stroke="#3f4248" stroke-width="2.200" fill="none"/>
<!-- 3 grid white -->
<g fill="#000" stroke="#fdfdfd" stroke-width="2.500">
<rect x="2027.700" y="57.100" width="7.500" height="7.500"/><rect x="2041.500" y="57.100" width="7.500" height="7.500"/><rect x="2055.400" y="57.100" width="7.500" height="7.500"/>
<rect x="2027.700" y="70.800" width="7.500" height="7.500"/><rect x="2041.500" y="70.800" width="7.500" height="7.500"/><rect x="2055.400" y="70.800" width="7.500" height="7.500"/>
<rect x="2027.700" y="84.500" width="7.500" height="7.500"/><rect x="2041.500" y="84.500" width="7.500" height="7.500"/><rect x="2055.400" y="84.500" width="7.500" height="7.500"/>
</g>
<!-- 4 grid green -->
<g fill="#0fd81c" stroke="#fdfdfd" stroke-width="2.500">
<rect x="2100.900" y="57.100" width="7.500" height="7.500"/><rect x="2114.800" y="57.100" width="7.500" height="7.500"/><rect x="2128.700" y="57.100" width="7.500" height="7.500"/>
<rect x="2100.900" y="70.800" width="7.500" height="7.500"/><rect x="2114.800" y="70.800" width="7.500" height="7.500"/><rect x="2128.700" y="70.800" width="7.500" height="7.500"/>
<rect x="2100.900" y="84.500" width="7.500" height="7.500"/><rect x="2114.800" y="84.500" width="7.500" height="7.500"/><rect x="2128.700" y="84.500" width="7.500" height="7.500"/>
</g>
<!-- 5 up arrow -->
<rect x="2172.700" y="77.700" width="37.900" height="21.600" fill="url(#gbx)"/>
<path d="M2177.400 87.100 H2205.900 M2177.400 92.900 H2205.900" stroke="#7f8c9e" stroke-width="1.600"/>
<path d="M2191.300 49.200 L2215.800 73.700 L2201.800 73.700 L2201.800 81.200 L2180.900 81.200 L2180.900 73.700 L2166.900 73.700 Z" fill="#c8711b"/>
<path d="M2191.300 52 L2209 71.500 L2191.300 71.500Z" fill="#d27a22" opacity="0.700"/>
<!-- 6 down arrow -->
<rect x="2245.700" y="50" width="37.600" height="20.200" fill="url(#gbx)"/>
<path d="M2250.500 56.800 H2278.500 M2250.500 61.700 H2278.500" stroke="#7f8c9e" stroke-width="1.600"/>
<path d="M2254.800 66.700 L2275.200 66.700 L2275.200 74.800 L2289.200 74.800 L2264.700 99.900 L2240.300 74.800 L2254.800 74.800 Z" fill="#c8711b"/>
<path d="M2264.700 77 L2283 77 L2264.700 96Z" fill="#d27a22" opacity="0.700"/>
<!-- 7 merge -->
<g fill="url(#gbx)"><rect x="2314" y="50" width="18.300" height="12"/><rect x="2314" y="66.700" width="18.300" height="12.200"/><rect x="2314" y="83.300" width="18.300" height="12.800"/><rect x="2344.700" y="61.200" width="18.400" height="26.400"/></g>
<path d="M2327 58.500 L2343.300 73.300 L2327 89.400 Z" fill="#c8711b"/>
<!-- 8 split -->
<g fill="url(#gbx)"><rect x="2387" y="61.200" width="13.400" height="26.400"/><rect x="2417.600" y="50" width="18.300" height="12"/><rect x="2417.600" y="66.700" width="18.300" height="12.200"/><rect x="2417.600" y="83.300" width="18.300" height="12.800"/></g>
<path d="M2399.800 58.500 L2416.700 73.300 L2399.800 88.800 Z" fill="#c8711b"/>
<!-- 9 hand -->
<path d="M2459.600 79 C2459.400 72.500 2465.500 69.600 2473.500 68.200 L2477.600 57 C2478.800 53.800 2484.200 54.600 2483.800 58.500 L2482.400 68.600 L2506.500 69.700 C2511.200 70 2511.200 75 2506.500 75.200 L2493.800 75.600 C2496.200 79.500 2494.300 83.500 2490 86 C2484 90.300 2470 91.200 2463.500 88.300 C2459.800 86.500 2459.700 83 2459.600 79Z" fill="#e9a68b"/>
<path d="M2463.500 88.300 C2470 91.200 2484 90.300 2490 86 C2484 88 2472 88.500 2463.500 86.500Z" fill="#c98468"/>
<path d="M2482.400 68.600 L2493.800 75.600" stroke="#cf8a70" stroke-width="1" fill="none"/>
<!-- 10 people -->
<rect x="2563.400" y="86" width="10.800" height="10.400" fill="#050505"/>
<path d="M2559 66 C2560 63.500 2574 63.500 2575 66 L2574.300 88.200 L2561 88.200Z" fill="#d2161e"/>
<rect x="2574" y="66.500" width="2.800" height="21.500" fill="#f3b4a4"/>
<ellipse cx="2567.500" cy="57" rx="6.600" ry="7.200" fill="#a0541c"/>
<ellipse cx="2567" cy="58.800" rx="4.600" ry="5.400" fill="#eeb094"/>
<rect x="2541.500" y="92" width="18.500" height="6.700" fill="#050505"/>
<path d="M2538.800 68 C2539 64.500 2543 63.600 2550.500 63.600 C2558 63.600 2562 64.500 2562.300 68 L2562.300 94 L2538.800 94Z" fill="#0e6bc2"/>
<path d="M2547.500 63.800 L2550.500 70.500 L2553.500 63.800Z" fill="#e8eef6"/>
<path d="M2549.600 64.500 L2551.400 64.500 L2551.800 69.500 L2550.500 71 L2549.200 69.500Z" fill="#d8405a"/>
<rect x="2538.800" y="91.500" width="3.200" height="3" fill="#f0c0a8"/><rect x="2559.200" y="91.500" width="3.200" height="3" fill="#f0c0a8"/>
<ellipse cx="2551" cy="57" rx="6.400" ry="7.200" fill="#efb294"/>
<path d="M2544.600 55.500 C2544.600 50.500 2548 49.600 2551.500 49.800 C2555.500 50 2557.600 52 2557.400 55 C2555.500 53 2551 52.500 2548 53.500 C2546.500 54 2545.500 55 2544.600 55.500Z" fill="#cc7a2c"/>
<!-- 11 fuel pump -->
<path d="M2606 91.700 L2652 91.700 L2655 96.400 L2603 96.400Z" fill="#b95c0a"/>
<rect x="2611.800" y="78.500" width="15.100" height="13.200" fill="#a2a2a2"/>
<rect x="2608.900" y="58.900" width="20.300" height="20" fill="#b4b4b2"/>
<rect x="2612.200" y="62" width="15.300" height="14" fill="#4b4b49"/>
<path d="M2614.100 65.200 H2625.200 M2614.100 70.400 H2625.200" stroke="#8c8c58" stroke-width="2"/>
<path d="M2629.200 68.600 C2633.500 68 2634.300 70.500 2634.300 74 L2634.300 83 C2634.300 89.500 2644 89.500 2644 83 L2644 70" fill="none" stroke="#d9b913" stroke-width="2.800"/>
<path d="M2640 62.500 L2647.500 56 L2650.500 59.500 L2648.500 68.500 L2645.500 70.500 L2641 68.500Z" fill="#e9e9e9"/>
<path d="M2645.500 70.500 L2648.500 68.500 L2649.400 64 L2646 66.500Z" fill="#8e8e8e"/>
<path d="M2648 57.500 L2657 48" stroke="#e3e3e3" stroke-width="2.400" stroke-linecap="round"/>
<!-- 12 compress -->
<g fill="#a6e0f2"><rect x="2679" y="50" width="19" height="18.400"/><rect x="2709.600" y="50" width="18.600" height="18.400"/><rect x="2679" y="80.100" width="19" height="18.600"/><rect x="2709.600" y="80.100" width="18.600" height="18.600"/></g>
<g fill="#ff8d1c">
<path id="carr" stroke="#3a2208" stroke-width="1" stroke-linejoin="round" d="M2685.400 60.600 L2689.600 56.400 L2694.200 61.600 L2700.100 55.900 L2700.100 71.400 L2684.200 71.400 L2690 65.800 Z"/>
<use href="#carr" transform="translate(5407.200 0) scale(-1 1)"/>
<use href="#carr" transform="translate(0 148.700) scale(1 -1)"/>
<use href="#carr" transform="translate(5407.200 148.700) scale(-1 -1)"/>
</g>
<!-- 13 play plus -->
<path d="M2751.300 47.500 L2776.500 70.500 L2751.300 93.500Z" fill="url(#org)"/>
<path d="M2779.300 63.800 h11 v12.800 h13.400 v11 h-13.400 v13.400 h-11 v-13.400 h-13.400 v-11 h13.400Z" fill="url(#grn)"/>
<!-- 14 plus play -->
<path d="M2852 47.500 L2877.200 70.300 L2852 93.500Z" fill="url(#org)"/>
<path d="M2835.500 63.800 h11 v12.800 h13.700 v11 h-13.700 v13.400 h-11 v-13.400 h-13.200 v-11 h13.200Z" fill="url(#grn)"/>
<!-- 15 train x -->
<path d="M2899 72 C2899 57 2906 50.400 2914.600 50.400 C2923.200 50.400 2930.400 57 2930.400 72 L2930.400 82 C2926 86.500 2904 86.500 2899 82Z" fill="url(#dome)"/>
<rect x="2899" y="64.400" width="31.400" height="5.400" fill="#d7c163"/>
<path d="M2907.400 62 C2908 58.500 2911 57.600 2914.400 57.600 C2918 57.600 2921 58.500 2921.500 62 L2921.500 63.800 L2907.400 63.800Z" fill="#050505"/>
<circle cx="2903.300" cy="85.300" r="3.200" fill="#f3f3f3"/><rect x="2902.600" y="85" width="1.400" height="8" fill="#d8d8d8"/>
<rect x="2906" y="84.500" width="14" height="3" fill="#3a3f48"/>
<circle cx="2933" cy="81.200" r="17.600" fill="url(#redc)"/>
<path d="M2924.800 73 L2941.200 89.400 M2941.200 73 L2924.800 89.400" stroke="#fff" stroke-width="5.400"/>
<!-- 16 doc gear -->
<rect x="2975.300" y="50.400" width="36.600" height="43" rx="2" fill="#6b7071" stroke="#8e9394" stroke-width="1.300"/>
<rect x="2976" y="51" width="35.200" height="6.500" fill="#545959"/>
<path d="M2979.600 64.900 H3001 M2979.600 70.200 H2992 M2979.600 75.400 H2996 M2979.600 81.200 H2989 M2979.600 87 H2993" stroke="#9da3a4" stroke-width="2.200"/>
<g fill="#a8d8ea"><circle cx="3007.500" cy="85.900" r="11.300"/>
<g id="teeth"><rect x="3004.600" y="69.600" width="5.800" height="7" rx="1"/><rect x="3004.600" y="95.200" width="5.800" height="7" rx="1"/><rect x="2991.200" y="83" width="7" height="5.800" rx="1"/><rect x="3016.800" y="83" width="7" height="5.800" rx="1"/></g>
<use href="#teeth" transform="rotate(45 3007.500 85.900)"/></g>
<rect x="3004.700" y="83.100" width="5.600" height="5.600" fill="#17586e"/>
<path d="M3013.300 86 L3023.800 95.300 L3013.300 102.200Z" fill="#ff8d1c"/>
<!-- 17 arrow box -->
<rect x="3064.900" y="55.900" width="26.200" height="37.600" fill="#1b6f9b"/>
<path d="M3042.200 69 L3053.900 69 L3053.900 56.200 L3075.400 75.700 L3053.900 95.800 L3053.900 82.400 L3042.200 82.400Z" fill="#c27a32"/>
<!-- 18 flag -->
<rect x="3127.200" y="51" width="8.800" height="44.800" fill="url(#pol)"/>
<path d="M3136 52.300 C3143 49.500 3147.500 53 3151.500 57.500 C3155 61 3158.500 58.500 3161.600 55.500 L3161.600 75.500 C3158 80.500 3153.500 80.500 3149.500 76.500 C3145.500 73.500 3140 74.500 3136 76.800Z" fill="url(#flg)"/>
<!-- 19 monitor -->
<path d="M3195 52.700 L3237.500 52.700 Q3241 52.700 3241 56.200 L3241 72 L3243.200 72.500 L3243.200 90 L3241 90.500 L3241 93 Q3241 96.400 3237.500 96.400 L3195 96.400 Q3191.300 96.400 3191.300 93 L3191.300 56.200 Q3191.300 52.700 3195 52.700Z" fill="#f3f3f2"/>
<rect x="3195.900" y="57.400" width="39.600" height="13.600" fill="#b2eafa" stroke="#a3a7a8" stroke-width="1.200"/>
<rect x="3193" y="72" width="49" height="1.500" fill="#a5a5a5"/>
<rect x="3194" y="74" width="48" height="13.500" fill="#fefefe"/>
<path d="M3199.400 84.200 H3236.800" stroke="#050505" stroke-width="2.400" stroke-dasharray="4.100 4.180"/>
<rect x="3194.200" y="88.400" width="45" height="2.900" fill="#4c9cab"/>
<!-- 20 house -->
<path d="M3288.800 56.800 L3315.300 70.800 L3305.400 76.600 L3271.600 76.600 L3261.700 70.800Z" fill="#7c1518"/>
<path d="M3288.800 56.800 L3315.300 70.800 L3305.400 76.600 M3271.600 76.600 L3261.700 70.800 L3288.800 56.800" fill="none" stroke="#f1e212" stroke-width="3.200" stroke-dasharray="3.300 2.300"/>
<rect x="3267.300" y="77.700" width="48" height="15.800" fill="#fdfdfd"/>
<path d="M3272.200 90 H3311" stroke="#050505" stroke-width="2.400" stroke-dasharray="4.300 4.050"/>
</g>
</svg>

<!-- ===== list ===== -->
<div id="list" class="abs" style="left:1908px;top:140px;width:1420px;height:1726px;background:#000"></div>
<div id="lhead" class="abs" style="left:1908px;top:140px;width:1420px;height:39px;background:#121212"></div>
<div class="abs" style="left:1973px;top:141px;width:1.300px;height:37px;background:#e6e6e6"></div>
<div class="abs" style="left:2063px;top:141px;width:1.300px;height:37px;background:#e6e6e6"></div>
<div class="abs" style="left:2569px;top:141px;width:1.300px;height:37px;background:#e6e6e6"></div>
<div class="abs" style="left:2850px;top:141px;width:1.300px;height:37px;background:#e6e6e6"></div>
<div class="abs" style="left:3132px;top:141px;width:1.300px;height:37px;background:#e6e6e6"></div>
<div class="abs" style="left:3216px;top:141px;width:1.300px;height:37px;background:#e6e6e6"></div>
<div class="abs" style="left:3326px;top:141px;width:1.300px;height:37px;background:#e6e6e6"></div>
<div class="abs txt" style="left:2069.300px;top:150px;font-size:20px">Zielort</div>
<div class="abs txt" style="left:2575.200px;top:150px;font-size:20px">Ankunftszeit</div>
<div class="abs txt" style="left:2857.200px;top:150px;font-size:20px">Abfahrtszeit</div>
<div class="abs" style="left:1908px;top:211px;width:1420px;height:1.400px;background:#8a8a8a"></div>
<div class="abs txt" style="left:2070.100px;top:184.750px;font-size:23.850px">185 MRCE Vorkloster</div>
<div class="abs txt" style="left:2575.800px;top:184.750px;font-size:23.850px">--:--:--</div>
<div class="abs txt" style="left:2858.300px;top:184.750px;font-size:23.850px">15:05:30</div>
<div class="abs txt" style="left:2070.100px;top:211.400px;font-size:23.850px">Portal14</div>
<div class="abs txt" style="left:2575.800px;top:211.400px;font-size:23.850px">15:09:54</div>
<div class="abs txt" style="left:2858.300px;top:211.400px;font-size:23.850px">15:09:54</div>
<div id="chk" class="abs" style="left:1923px;top:206px;width:40px;height:37px;border:2.200px solid #dcdcdc;box-shadow:0 0 2px rgba(255,255,255,0.350),inset 0 0 2px rgba(255,255,255,0.250)"></div>
<svg id="rowicons" class="abs" style="left:2004px;top:184px" width="30" height="50" viewBox="2004 184 30 50">
<defs><filter id="bl3"><feGaussianBlur stdDeviation="0.450"/></filter></defs>
<g filter="url(#bl3)">
<path d="M2013.600 196.500 L2024.500 198 L2024.800 207.800 L2021 208.300 L2015.800 207.300 L2014.200 201.500Z" fill="#e6a68c"/>
<path d="M2022.500 197 C2025 198 2026.300 200.500 2026 203.500 C2025 205 2024.500 203 2024.300 200.500Z" fill="#c2660e"/>
<path d="M2011 193.200 C2011 189.200 2016 187.300 2020.500 187.700 C2025.800 188.300 2029.500 191.500 2029.300 195 C2029 197.500 2027 198.800 2025 199 C2023.800 197.800 2021.500 196.800 2018.500 196.400 C2015.500 196 2014 196.200 2012.500 196.800 C2011 197 2010.500 195.500 2011 193.200Z" fill="#262626"/>
<path d="M2017.500 193.500 C2019.500 192.600 2022 193 2023.500 194.300" stroke="#777b80" stroke-width="1" fill="none"/>
<rect x="2016.800" y="216.200" width="10.300" height="13.600" fill="#2196d8"/>
<path d="M2009 220.600 L2013.300 220.600 L2013.300 216.300 L2020.500 223 L2013.300 229.700 L2013.300 225.400 L2009 225.400Z" fill="#ff8d1c"/>
</g>
</svg>

<!-- ===== bottom right panel + OK ===== -->
<div id="brblack" class="abs" style="left:1945px;top:1866px;width:1291px;height:35px;background:#000"></div>
<div id="brframeL" class="abs" style="left:1908px;top:1866px;width:37px;height:294px;background:#4b4f65"></div>
<div class="abs" style="left:1917px;top:1866px;width:9.500px;height:294px;background:linear-gradient(#6c5d48,#8a6f48 20px,#5a5040 40px,#3a3a3c 60px,#343640 255px,#a08048 262px,#b89458 294px)"></div>
<div id="brframeR" class="abs" style="left:3236px;top:1866px;width:17px;height:294px;background:#5d627a"></div>
<div id="brbottom" class="abs" style="left:1942px;top:2125px;width:1294px;height:35px;background:linear-gradient(#4f5468 0,#5a5f76 6px,#5c6279 35px)"></div>
<div id="okpanel" class="abs" style="left:1908px;top:1900.500px;width:1420px;height:225px;background:linear-gradient(#18202b 0,#161d28 55%,#1f2633 58%,#242b39 100%)"></div>
<div id="okpanelL" class="abs" style="left:1908px;top:1900.500px;width:37px;height:225px;background:rgba(70,78,98,0.300)"></div>
<div id="okpanelR" class="abs" style="left:3253px;top:1900.500px;width:75px;height:225px;background:linear-gradient(#2a3442,#353f4d 40%,#2f3745)"></div>
<div id="okpanelR2" class="abs" style="left:3236px;top:1900.500px;width:17px;height:225px;background:#2c3444"></div>
<div id="okbtn" class="abs" style="left:2940.500px;top:1931px;width:347px;height:163.500px;background:linear-gradient(#2d343e 0,#30363f 55%,#3b414c 62%,#3f4450 100%);border:1.500px solid #3e4960"></div>
<div id="okbtn-r" class="abs" style="left:3236px;top:1933px;width:50px;height:160px;background:linear-gradient(#3c4452,#444b58 50%,#3e4452)"></div>
<div id="okbtn-in" class="abs" style="left:2944.500px;top:1935.500px;width:339px;height:154.500px;border:1.600px solid #5f6d8b"></div>
<div id="oktxt" class="abs txt" style="left:2940px;top:1991px;width:348px;text-align:center;font-size:40px">OK</div>


</div></div>
</body>
</html>
